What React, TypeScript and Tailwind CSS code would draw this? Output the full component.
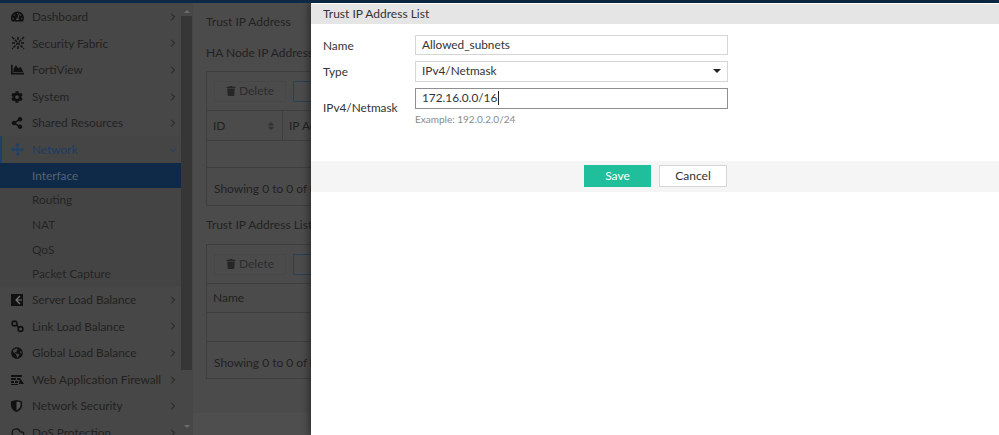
import { FaChartArea, FaCog, FaGlobeAmericas, FaShareAlt, FaSort, FaTachometerAlt, FaTrash } from "react-icons/fa";
import { LuChevronDown, LuChevronRight, LuCloud } from "react-icons/lu";

const FabricIcon = () => (
  <svg width="14" height="14" viewBox="0 0 14 14" stroke="#111" strokeWidth="1.4" strokeDasharray="3 1" fill="none">
    <path d="M1 1l12 12M13 1L1 13M7 1v3M7 10v3M1 7h3M10 7h3" />
  </svg>
);

const MoveIcon = () => (
  <svg width="13" height="13" viewBox="0 0 13 13" fill="#1d4168">
    <path d="M6.5 0L9 2.6H7.3v3.1h3.1V4L13 6.5 10.4 9V7.3H7.3v3.1H9L6.5 13 4 10.4h1.7V7.3H2.6V9L0 6.5 2.6 4v1.7h3.1V2.6H4z" />
  </svg>
);

const ServerIcon = () => (
  <svg width="12" height="12" viewBox="0 0 12 12">
    <rect width="12" height="12" fill="#111" />
    <path d="M9 2L5 6l4 4M6 6h5" stroke="#777" strokeWidth="1.2" fill="none" />
  </svg>
);

const LinkIcon = () => (
  <svg width="13" height="13" viewBox="0 0 13 13" fill="none" stroke="#111" strokeWidth="1.6">
    <circle cx="3.5" cy="3.5" r="2.4" />
    <circle cx="9.5" cy="9" r="2.4" />
    <path d="M5.5 5l2 2" />
  </svg>
);

const WafIcon = () => (
  <svg width="13" height="10" viewBox="0 0 13 10" fill="#111">
    <path d="M0 0h11v2H0zM0 3h5v2H0zM6 3h3v2H6zM0 6h3v2H0zM4 6h3v2H4zM0 9h7v1H0zM9 3l4 6H8z" />
  </svg>
);

const ShieldIcon = () => (
  <svg width="11" height="12" viewBox="0 0 11 12">
    <path d="M0 1.2L5.5 0 11 1.2v4C11 8.5 8.5 10.8 5.5 12 2.5 10.8 0 8.5 0 5.2z" fill="#111" />
    <path d="M5.5 1.5L9.5 2.3v3C9.5 7.6 7.8 9.3 5.5 10.3z" fill="#555" />
  </svg>
);

const menuTop = [
  { label: "Dashboard", icon: <FaTachometerAlt size={13} color="#111" /> },
  { label: "Security Fabric", icon: <FabricIcon /> },
  { label: "FortiView", icon: <FaChartArea size={13} color="#111" /> },
  { label: "System", icon: <FaCog size={12} color="#111" /> },
  { label: "Shared Resources", icon: <FaShareAlt size={12} color="#111" /> },
];

const menuBottom = [
  { label: "Server Load Balance", icon: <ServerIcon /> },
  { label: "Link Load Balance", icon: <LinkIcon /> },
  { label: "Global Load Balance", icon: <FaGlobeAmericas size={12} color="#111" /> },
  { label: "Web Application Firewall", icon: <WafIcon /> },
  { label: "Network Security", icon: <ShieldIcon /> },
  { label: "DoS Protection", icon: <LuCloud size={14} color="#111" /> },
];

const subItems = ["Routing", "NAT", "QoS", "Packet Capture"];

const MenuRow = ({ label, icon }: { label: string; icon: React.ReactNode }) => (
  <div className="flex h-[26.6px] items-center pl-[11px] pr-[2px] text-[11.8px] text-[#222]">
    <span className="flex w-[21px] shrink-0 items-center">{icon}</span>
    <span className="flex-1 whitespace-nowrap">{label}</span>
    <LuChevronRight size={12} color="#1c1c1c" />
  </div>
);

const DeleteBar = () => (
  <div className="flex h-[39px] items-center border-b border-[#3e3e3e] pl-[7px]">
    <div className="flex h-[21px] w-[72px] items-center justify-center gap-[3px] border border-[#474747] text-[12px] text-[#2c2c2c]">
      <FaTrash size={10} color="#262626" />
      Delete
    </div>
    <div className="ml-[7px] h-[21px] w-[40px] shrink-0 rounded-[1px] border border-[#2b3f56]" />
  </div>
);

const App = () => {
  return (
    <div className="relative h-[435px] w-[999px] overflow-hidden bg-[#4b4b4b] font-['Lato',sans-serif]">
      <div className="h-[3px] bg-[#0c2a47]" />
      <div className="flex h-[432px]">
        {/* sidebar, dimmed by hand so the modal keeps full colour */}
        <div className="flex h-full w-[193px] shrink-0">
          <div className="h-full w-[181px] shrink-0 overflow-hidden bg-[#474747] pt-[0.5px]">
            {menuTop.map((item) => (
              <MenuRow key={item.label} {...item} />
            ))}
            <div className="flex h-[26.6px] items-center border-l-2 border-[#1d4168] bg-[#454545] pl-[9px] pr-[2px] text-[11.8px] text-[#1c3d63]">
              <span className="flex w-[21px] items-center">
                <MoveIcon />
              </span>
              <span className="flex-1">Network</span>
              <LuChevronDown size={12} color="#1d4168" />
            </div>
            <div className="flex h-[24.7px] items-center bg-[#0f2a48] pl-[32px] text-[11.8px] text-[#566373]">Interface</div>
            <div className="bg-[#444]">
              {subItems.map((label) => (
                <div key={label} className="flex h-[24.7px] items-center pl-[32px] text-[11.8px] text-[#242424]">
                  {label}
                </div>
              ))}
            </div>
            {menuBottom.map((item) => (
              <MenuRow key={item.label} {...item} />
            ))}
          </div>
          <div className="flex h-full w-[12px] shrink-0 flex-col items-center bg-[#474747] pr-px">
            <span className="mt-[7px] h-0 w-0 border-x-[3px] border-b-[3px] border-x-transparent border-b-[#6b6b6b]" />
            <div className="mt-[3px] h-[354px] w-[11px] bg-[#363636]" />
            <span className="mt-[55px] h-0 w-0 border-x-[3px] border-t-[3px] border-x-transparent border-t-[#6b6b6b]" />
          </div>
        </div>

        {/* page behind the modal */}
        <div className="w-[118px] shrink-0 overflow-hidden pl-[13px] text-[12px] text-[#222]">
          <div className="w-[300px]">
            <p className="mt-[11px] leading-[16px]">Trust IP Address</p>
            <p className="mt-[15px] leading-[16px]">HA Node IP Address</p>
            <div className="mt-[10px] border border-[#3e3e3e]">
              <DeleteBar />
              <div className="flex h-[30px] items-center border-b border-[#3e3e3e]">
                <span className="flex h-full w-[76px] items-center justify-between border-r border-[#3e3e3e] px-[6px]">
                  ID
                  <FaSort size={10} color="#333" />
                </span>
                <span className="pl-[6px]">IP Address</span>
              </div>
              <div className="h-[27px] border-b border-[#3e3e3e]" />
              <div className="flex h-[37px] items-center pl-[7px] pt-[5px]">Showing 0 to 0 of 0</div>
            </div>
            <p className="mt-[11px] leading-[16px]">Trust IP Address List</p>
            <div className="mt-[11px] border border-[#3e3e3e]">
              <DeleteBar />
              <div className="flex h-[29px] items-center border-b border-[#3e3e3e] pl-[6px]">Name</div>
              <div className="h-[29px] border-b border-[#3e3e3e]" />
              <div className="flex h-[36px] items-center pl-[7px] pt-[5px]">Showing 0 to 0 of 0</div>
            </div>
            <div className="-ml-[13px] mt-[34px] h-[30px] bg-[#4e4e4e]" />
          </div>
        </div>

        {/* modal */}
        <div className="flex-1 bg-white text-[11.8px] text-[#333] shadow-[-3px_0_6px_rgba(0,0,0,0.35)]">
          <div className="mt-[1px] flex h-[20px] items-center bg-[#e5e5e5] pl-[12px] text-[12px]">Trust IP Address List</div>
          <div className="h-[137px] pl-[12px] pt-[10.5px]">
            <div className="flex h-[20.5px] items-center">
              <span className="w-[92px] pt-[2px]">Name</span>
              <div className="flex h-full w-[313px] items-center border border-[#d5d5d5] pl-[6px]">Allowed_subnets</div>
            </div>
            <div className="mt-[5.5px] flex h-[21px] items-center">
              <span className="w-[92px] pt-[2px]">Type</span>
              <div className="flex h-full w-[313px] items-center justify-between border border-[#d5d5d5] pl-[6px] pr-[6px]">
                IPv4/Netmask
                <span className="h-0 w-0 border-x-[4px] border-t-[4px] border-x-transparent border-t-[#222]" />
              </div>
            </div>
            <div className="mt-[6px] flex">
              <span className="w-[92px] pt-[11px]">IPv4/Netmask</span>
              <div>
                <div className="flex h-[21px] w-[313px] items-center border border-[#8f8f8f] pl-[6px]">
                  172.16.0.0/16
                  <span className="ml-[1px] h-[14px] w-px bg-[#222]" />
                </div>
                <p className="mt-[4px] text-[10px] leading-[13px] text-[#8a8a8a]">Example: 192.0.2.0/24</p>
              </div>
            </div>
          </div>
          <div className="flex h-[31px] items-start justify-end gap-[8px] bg-[#f5f5f5] pr-[272px] pt-[4px]">
            <button type="button" className="h-[22px] w-[67px] bg-[#1fbf9b] text-[12px] text-white">
              Save
            </button>
            <button type="button" className="h-[22px] w-[68px] border border-[#d5d5d5] bg-white text-[12px] text-[#333]">
              Cancel
            </button>
          </div>
        </div>
      </div>
    </div>
  );
};

export default App;
